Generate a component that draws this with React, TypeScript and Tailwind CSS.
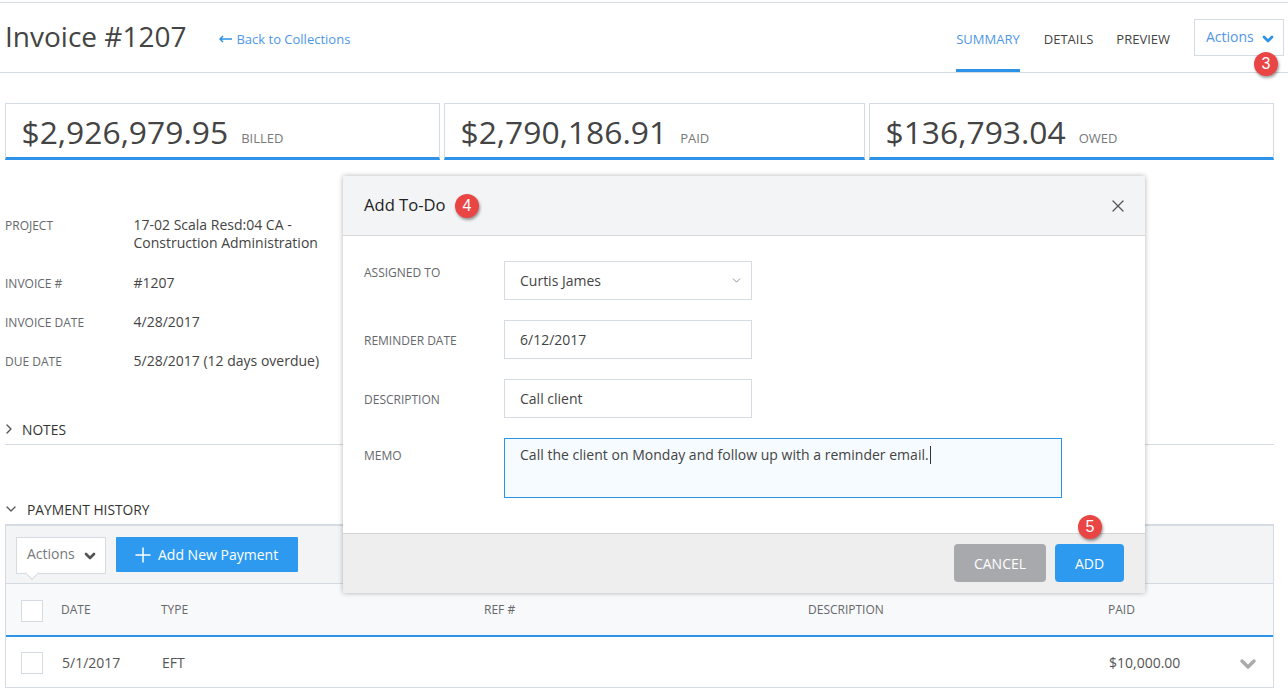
import React from 'react';
import { ChevronDown, ChevronRight, Plus, X } from 'lucide-react';

const Badge = ({ n, className }: { n: number; className: string }) => (
  <span
    className={`absolute flex h-[24px] w-[24px] items-center justify-center rounded-full bg-[#e94545] text-[16px] leading-none text-white shadow-[1px_2px_3px_rgba(0,0,0,0.4)] ${className}`}
    style={{ fontFamily: '"Liberation Sans", sans-serif' }}
  >
    {n}
  </span>
);

const StatCard = ({ amount, label, width }: { amount: string; label: string; width: string }) => (
  <div className={`flex h-[57px] items-baseline border border-b-[3px] border-[#d5dbe3] border-b-[#2d93e6] pl-[15.5px] pt-[7px] ${width}`}>
    <span className="text-[31.8px] leading-[42px] text-[#444444]">{amount}</span>
    <span className="ml-[13px] -translate-y-[1px] text-[13px] text-[#77797c]">{label}</span>
  </div>
);

const InfoRow = ({ label, children, className }: { label: string; children: React.ReactNode; className: string }) => (
  <div className={`flex ${className}`}>
    <div className="w-[129px] pt-[1px] text-[12px] leading-[18px] text-[#66686b]">{label}</div>
    <div className="-ml-[0.5px] w-[200px] text-[14px] leading-[18px] text-[#444444]">{children}</div>
  </div>
);

const Field = ({ label, value, className }: { label: string; value: string; className: string }) => (
  <div className={`flex items-center ${className}`}>
    <div className="w-[140px] pt-[2px] text-[12px] text-[#66686b]">{label}</div>
    <div className="flex h-[39px] w-[248px] items-center border border-[#d5dbe3] pl-[15px] text-[14px] text-[#444444]">{value}</div>
  </div>
);

const Checkbox = () => <div className="h-[22px] w-[22px] translate-y-[1px] border border-[#d5dbe3] bg-white" />;

const tableCols = 'grid grid-cols-[56px_100px_323px_324px_300px_1fr] items-center';

export default function App() {
  return (
    <div
      className="relative h-[690px] w-[1288px] overflow-hidden bg-white"
      style={{ fontFamily: '"Open Sans", sans-serif' }}
    >
      {/* Page header */}
      <div className="mt-[2px] flex h-[71px] items-stretch border-y border-[#d5dbe3] pl-[5px] pr-[4px]">
        <h1 className="pt-[14px] text-[28px] font-normal leading-[38px] text-[#444444]">Invoice #1207</h1>
        <a className="ml-[33px] flex items-start pt-[27px] text-[13px] leading-[18px] text-[#4f97e8]">
          <svg className="mr-[4px] mt-[5px] h-[8px] w-[13px] text-[#2d93e6]" viewBox="0 0 13 8" fill="none" stroke="currentColor" strokeWidth="1.5">
            <path d="M13 4H1M4 1L1 4l3 3" />
          </svg>
          Back to Collections
        </a>
        <div className="ml-auto flex">
          <div className="h-[69px] border-b-[3px] border-[#2d93e6] pt-[27px] text-[13px] leading-[18px] text-[#4f97e8]">SUMMARY</div>
          <div className="ml-[24px] pt-[27px] text-[13px] leading-[18px] text-[#444444]">DETAILS</div>
          <div className="ml-[23px] pt-[27px] text-[13px] leading-[18px] text-[#444444]">PREVIEW</div>
          <div className="ml-[24px] mt-[16px] flex h-[37px] w-[90px] items-start border border-[#d5dbe3] pl-[11px] pt-[7px] text-[14px] leading-[19px] text-[#4f97e8]">
            Actions
            <ChevronDown className="ml-[6px] mt-[4px] h-[16px] w-[16px] text-[#2d93e6]" strokeWidth={4} />
          </div>
        </div>
      </div>
      <Badge n={3} className="left-[1254px] top-[52px]" />

      {/* Totals */}
      <div className="ml-[5px] mt-[30px] flex gap-[4px]">
        <StatCard amount="$2,926,979.95" label="BILLED" width="w-[435px]" />
        <StatCard amount="$2,790,186.91" label="PAID" width="w-[421px]" />
        <StatCard amount="$136,793.04" label="OWED" width="w-[405px]" />
      </div>

      {/* Invoice info */}
      <div className="ml-[5px] mt-[56px]">
        <InfoRow label="PROJECT" className="">
          17-02 Scala Resd:04 CA -<br />Construction Administration
        </InfoRow>
        <InfoRow label="INVOICE #" className="mt-[22px]">#1207</InfoRow>
        <InfoRow label="INVOICE DATE" className="mt-[20px]">4/28/2017</InfoRow>
        <InfoRow label="DUE DATE" className="mt-[20px]">5/28/2017 (12 days overdue)</InfoRow>
      </div>

      {/* Notes */}
      <div className="ml-[5px] mr-[14px] mt-[49px] flex h-[25px] items-start border-b border-[#d5dbe3] text-[13.8px] leading-[19px] text-[#333333]">
        <ChevronRight className="ml-[-4px] mt-[1px] h-[16px] w-[16px] text-[#555555]" strokeWidth={2} />
        <span className="ml-[5px]">NOTES</span>
      </div>

      {/* Payment history */}
      <div className="ml-[5px] mr-[14px] mt-[55px]">
        <div className="flex h-[24px] items-start text-[13.8px] leading-[19px] text-[#333333]">
          <ChevronDown className="-ml-[2px] mt-[1px] h-[16px] w-[16px] text-[#555555]" strokeWidth={2} />
          <span className="ml-[8px]">PAYMENT HISTORY</span>
        </div>
        <div className="border-x border-[#d5dbe3]">
          <div className="flex h-[60px] items-start border-y border-t-[2px] border-[#d5dbe3] bg-[#f3f4f6] pl-[10px] pt-[11px]">
            <div className="relative flex h-[37px] w-[90px] items-start border border-[#d5dbe3] bg-white pl-[10px] pt-[6px] text-[14px] leading-[19px] text-[#77797c]">
              Actions
              <ChevronDown className="ml-[7px] mt-[4px] h-[16px] w-[16px] text-[#555555]" strokeWidth={4} />
              <span className="absolute left-[10px] top-[30px] h-[10px] w-[10px] rotate-45 border-b border-r border-[#d5dbe3] bg-white" />
            </div>
            <button className="ml-[10px] flex h-[35px] w-[182px] items-center rounded-[1px] bg-[#2d9af0] pl-[15px] text-[14px] text-white">
              <Plus className="mr-[3px] h-[24px] w-[24px]" strokeWidth={1.5} />
              Add New Payment
            </button>
          </div>
          <div className={`${tableCols} h-[53px] border-b-[2px] border-[#2d93e6] bg-[#f8f9fa] pl-[15px] text-[12px] text-[#66686b]`}>
            <Checkbox />
            <span className="-ml-[16px]">DATE</span>
            <span className="-ml-[16px]">TYPE</span>
            <span className="-ml-[16px]">REF #</span>
            <span className="-ml-[16px]">DESCRIPTION</span>
            <span className="-ml-[16px]">PAID</span>
          </div>
          <div className={`${tableCols} relative h-[51px] border-b border-[#d5dbe3] pl-[15px] text-[14px] text-[#555555]`}>
            <Checkbox />
            <span className="-ml-[15px]">5/1/2017</span>
            <span className="-ml-[15px]">EFT</span>
            <span />
            <span />
            <span className="-ml-[15px]">$10,000.00</span>
            <ChevronDown className="absolute left-[1230px] top-[15px] h-[24px] w-[24px] text-[#a9abae]" strokeWidth={3.5} />
          </div>
        </div>
      </div>

      {/* Add To-Do modal */}
      <div className="absolute left-[343px] top-[176px] flex h-[417px] w-[802px] flex-col bg-white shadow-[0_0_5px_rgba(0,0,0,0.3)]">
        <div className="relative flex h-[60px] items-center border-b border-[#d9d9d9] bg-[#f3f4f6] pl-[21px] pr-[17px] text-[16.6px] text-[#222222]">
          Add To-Do
          <X className="ml-auto h-[20px] w-[20px] text-[#555555]" strokeWidth={1.5} />
          <Badge n={4} className="left-[112px] top-[18px]" />
        </div>
        <div className="flex-1 pl-[21px] pt-[25px]">
          <div className="flex items-center">
            <div className="-mt-[15px] w-[140px] text-[12px] text-[#66686b]">ASSIGNED TO</div>
            <div className="flex h-[39px] w-[248px] items-center border border-[#d5dbe3] pl-[15px] text-[14px] text-[#444444]">
              Curtis James
              <ChevronDown className="ml-auto mr-[8px] h-[13px] w-[13px] text-[#77797c]" strokeWidth={1.5} />
            </div>
          </div>
          <Field label="REMINDER DATE" value="6/12/2017" className="mt-[20px]" />
          <Field label="DESCRIPTION" value="Call client" className="mt-[20px]" />
          <div className="mt-[20px] flex items-start">
            <div className="w-[140px] pt-[9px] text-[12px] text-[#66686b]">MEMO</div>
            <div className="h-[60px] w-[558px] border border-[#2d93e6] bg-[#f6fbff] pl-[15px] pt-[3px] text-[14px] leading-[19px] tracking-[0.015px] text-[#444444]">
              Call the client on Monday and follow up with a reminder email.
              <span className="ml-[1px] inline-block h-[18px] w-px translate-y-[4px] bg-[#333333]" />
            </div>
          </div>
        </div>
        <div className="relative flex h-[60px] items-start justify-end gap-[9px] border-t border-[#d4d4d4] bg-[#eeeeee] pr-[21px] pt-[10px]">
          <button className="h-[38px] w-[92px] rounded-[4px] bg-[#a7a9ac] text-[14px] text-white">CANCEL</button>
          <button className="h-[38px] w-[69px] rounded-[4px] bg-[#2d9af0] text-[14px] text-white">ADD</button>
          <Badge n={5} className="left-[735px] top-[-19px]" />
        </div>
      </div>
    </div>
  );
}
